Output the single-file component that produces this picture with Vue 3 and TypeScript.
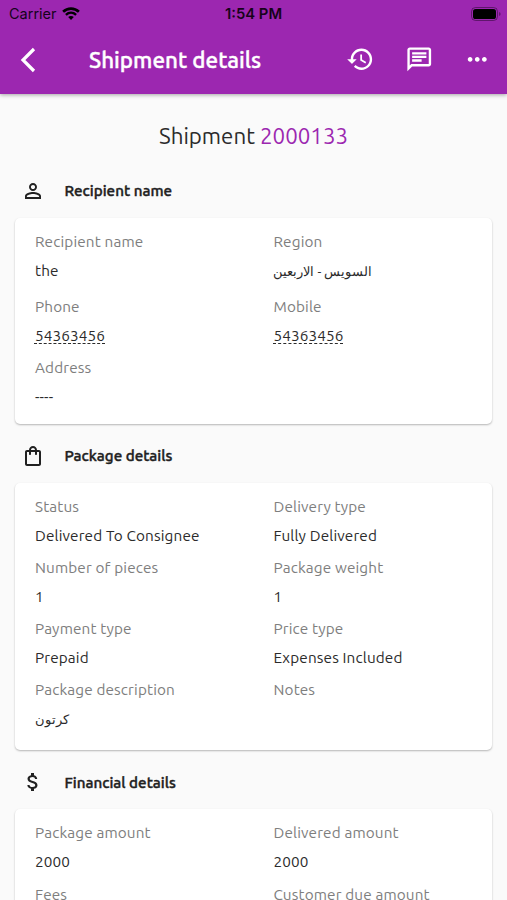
<script setup lang="ts">
interface Field {
  label: string
  value: string
  kind?: 'link' | 'rtl'
}
interface Section {
  title: string
  icon: 'person' | 'bag' | 'dollar'
  fields: Field[]
}

const sections: Section[] = [
  {
    title: 'Recipient name',
    icon: 'person',
    fields: [
      { label: 'Recipient name', value: 'the' },
      { label: 'Region', value: 'السويس - الاربعين', kind: 'rtl' },
      { label: 'Phone', value: '54363456', kind: 'link' },
      { label: 'Mobile', value: '54363456', kind: 'link' },
      { label: 'Address', value: '----' },
    ],
  },
  {
    title: 'Package details',
    icon: 'bag',
    fields: [
      { label: 'Status', value: 'Delivered To Consignee' },
      { label: 'Delivery type', value: 'Fully Delivered' },
      { label: 'Number of pieces', value: '1' },
      { label: 'Package weight', value: '1' },
      { label: 'Payment type', value: 'Prepaid' },
      { label: 'Price type', value: 'Expenses Included' },
      { label: 'Package description', value: 'كرتون', kind: 'rtl' },
      { label: 'Notes', value: '' },
    ],
  },
  {
    title: 'Financial details',
    icon: 'dollar',
    fields: [
      { label: 'Package amount', value: '2000' },
      { label: 'Delivered amount', value: '2000' },
      { label: 'Fees', value: '' },
      { label: 'Customer due amount', value: '' },
    ],
  },
]

const icons: Record<Section['icon'], string> = {
  person:
    'M12 5.9c1.16 0 2.1.94 2.1 2.1s-.94 2.1-2.1 2.1S9.9 9.16 9.9 8s.94-2.1 2.1-2.1m0 9c2.97 0 6.1 1.46 6.1 2.1v1.1H5.9V17c0-.64 3.13-2.1 6.1-2.1M12 4C9.79 4 8 5.79 8 8s1.79 4 4 4 4-1.79 4-4-1.79-4-4-4zm0 9c-2.67 0-8 1.34-8 4v3h16v-3c0-2.66-5.33-4-8-4z',
  bag: 'M18 6h-2c0-2.21-1.79-4-4-4S8 3.79 8 6H6c-1.1 0-2 .9-2 2v12c0 1.1.9 2 2 2h12c1.1 0 2-.9 2-2V8c0-1.1-.9-2-2-2zm-6-2c1.1 0 2 .9 2 2h-4c0-1.1.9-2 2-2zm6 16H6V8h2v2c0 .55.45 1 1 1s1-.45 1-1V8h4v2c0 .55.45 1 1 1s1-.45 1-1V8h2v12z',
  dollar:
    'M11.8 10.9c-2.27-.59-3-1.2-3-2.15 0-1.09 1.01-1.85 2.7-1.85 1.78 0 2.44.85 2.5 2.1h2.21c-.07-1.72-1.12-3.3-3.21-3.81V3h-3v2.16c-1.94.42-3.5 1.68-3.5 3.61 0 2.31 1.91 3.46 4.7 4.13 2.5.6 3 1.48 3 2.41 0 .69-.49 1.79-2.7 1.79-2.06 0-2.87-.92-2.98-2.1h-2.2c.12 2.19 1.76 3.42 3.68 3.83V21h3v-2.15c1.95-.37 3.5-1.5 3.5-3.55 0-2.84-2.43-3.81-4.7-4.4z',
}
</script>

<template>
  <div class="screen">
    <header class="appbar">
      <div class="status">
        <div class="carrier">
          <span>Carrier</span>
          <svg class="wifi" viewBox="0 0 18 13" fill="none" stroke="currentColor">
            <path d="M1.1 4.8C5.5.5 12.5.5 16.9 4.8" stroke-width="2.6" />
            <path d="M3.9 7.8C6.9 5 11.1 5 14.1 7.8" stroke-width="2.4" />
            <path d="M9 12.9 6.2 10.1C7.8 8.7 10.2 8.7 11.8 10.1Z" fill="currentColor" stroke="none" />
          </svg>
        </div>
        <span class="clock">1:54 PM</span>
        <svg class="battery" viewBox="0 0 32 14">
          <rect x=".5" y=".5" width="26" height="13" rx="4" fill="none" stroke="#16031b" stroke-opacity=".45" />
          <rect x="2" y="2" width="23" height="10" rx="2.6" fill="#000" />
          <path d="M28.2 5v4c1.8-.7 1.8-3.3 0-4z" fill="#16031b" fill-opacity=".5" />
        </svg>
      </div>
      <div class="toolbar">
        <svg class="back" viewBox="0 0 16 26" fill="none" stroke="currentColor" stroke-width="3.2">
          <path d="M14 2 3 13l11 11" />
        </svg>
        <h1>Shipment details</h1>
        <div class="actions">
          <svg viewBox="0 0 24 24">
            <path d="M13 3c-4.97 0-9 4.03-9 9H1l3.89 3.89.07.14L9 12H6c0-3.87 3.13-7 7-7s7 3.13 7 7-3.13 7-7 7c-1.93 0-3.68-.79-4.94-2.06l-1.42 1.42C8.27 19.99 10.51 21 13 21c4.97 0 9-4.03 9-9s-4.03-9-9-9zm-1 5v5l4.28 2.54.72-1.21-3.5-2.08V8H12z" />
          </svg>
          <svg viewBox="0 0 24 24">
            <path d="M4 4h16v12H5.17L4 17.17V4m0-2c-1.1 0-1.99.9-1.99 2L2 22l4-4h14c1.1 0 2-.9 2-2V4c0-1.1-.9-2-2-2H4zm2 10h8v2H6v-2zm0-3h12v2H6V9zm0-3h12v2H6V6z" />
          </svg>
          <svg viewBox="0 0 24 24">
            <path d="M6 10c-1.1 0-2 .9-2 2s.9 2 2 2 2-.9 2-2-.9-2-2-2zm12 0c-1.1 0-2 .9-2 2s.9 2 2 2 2-.9 2-2-.9-2-2-2zm-6 0c-1.1 0-2 .9-2 2s.9 2 2 2 2-.9 2-2-.9-2-2-2z" />
          </svg>
        </div>
      </div>
    </header>

    <main>
      <h2 class="title">Shipment <span>2000133</span></h2>
      <section v-for="s in sections" :key="s.title">
        <div class="heading">
          <svg viewBox="0 0 24 24"><path :d="icons[s.icon]" /></svg>
          <h3>{{ s.title }}</h3>
        </div>
        <div class="card">
          <div v-for="f in s.fields" :key="f.label" class="field">
            <div class="label">{{ f.label }}</div>
            <div class="value" :class="f.kind"><span>{{ f.value }}</span></div>
          </div>
        </div>
      </section>
    </main>
  </div>
</template>

<style>
body {
  background: #fafafa;
  overflow: hidden;
}
</style>

<style scoped>
.screen {
  height: 900px;
  overflow: hidden;
  background: #fafafa;
  color: #2b2b2b;
  font-family: Ubuntu, "Noto Sans", "Open Sans", sans-serif;
}
h1,
h2,
h3 {
  margin: 0;
}
svg {
  display: block;
  flex: none;
}
.appbar {
  position: relative;
  height: 93.5px;
  background: #9c27b0;
  box-shadow: 0 1px 4px rgba(0, 0, 0, 0.35);
}
.status {
  display: grid;
  grid-template-columns: 1fr auto 1fr;
  align-items: center;
  height: 27px;
  padding: 0 9px;
  color: #16031b;
  font-family: Inter, sans-serif;
  font-size: 14.5px;
}
.carrier {
  display: flex;
  align-items: center;
  gap: 5px;
}
.wifi {
  width: 18px;
  height: 13px;
  color: #000;
}
.clock {
  font-size: 14.8px;
  font-weight: 600;
}
.battery {
  width: 32px;
  height: 14px;
  justify-self: end;
  margin-right: -5px;
}
.toolbar {
  display: flex;
  align-items: center;
  height: 65px;
  padding-left: 19.5px;
  color: #fff;
}
.back {
  width: 16px;
  height: 26px;
}
h1 {
  margin-left: 53.5px;
  font-size: 22.4px;
  font-weight: 500;
  white-space: nowrap;
  -webkit-text-stroke: 0.4px currentColor;
}
.actions {
  display: flex;
  gap: 30px;
  margin-left: auto;
  padding-right: 15.5px;
}
.actions svg {
  width: 28.5px;
  height: 28.5px;
  fill: currentColor;
}
.title {
  height: 65px;
  line-height: 84px;
  text-align: center;
  font-size: 22.3px;
  font-weight: 400;
}
.title span {
  color: #9c27b0;
}
.heading {
  display: flex;
  align-items: center;
  height: 54.2px;
  padding: 5px 0 0 20.5px;
}
.heading svg {
  width: 24px;
  height: 24px;
  fill: #212121;
}
h3 {
  margin-left: 20px;
  font-size: 15.2px;
  font-weight: 500;
  color: #212121;
  -webkit-text-stroke: 0.4px currentColor;
}
.card {
  display: grid;
  grid-template-columns: 238.5px 1fr;
  margin: 0 15px 0 15.4px;
  padding: 9px 0 9.8px 19.6px;
  border-radius: 5px;
  background: #fff;
  box-shadow: 0 1px 2px rgba(0, 0, 0, 0.28);
}
.label {
  height: 30px;
  line-height: 30px;
  font-size: 15.3px;
  letter-spacing: 0.14px;
  color: #7e7e7e;
  white-space: nowrap;
}
.value {
  height: 31.15px;
  line-height: 28.8px;
  font-size: 15.3px;
  letter-spacing: 0.14px;
  color: #2b2b2b;
  white-space: nowrap;
}
.value.rtl {
  height: 35px;
  font-size: 13.1px;
  letter-spacing: 0;
}
.value.link span {
  text-decoration: underline dashed 1px;
  text-underline-offset: 2px;
}
</style>
